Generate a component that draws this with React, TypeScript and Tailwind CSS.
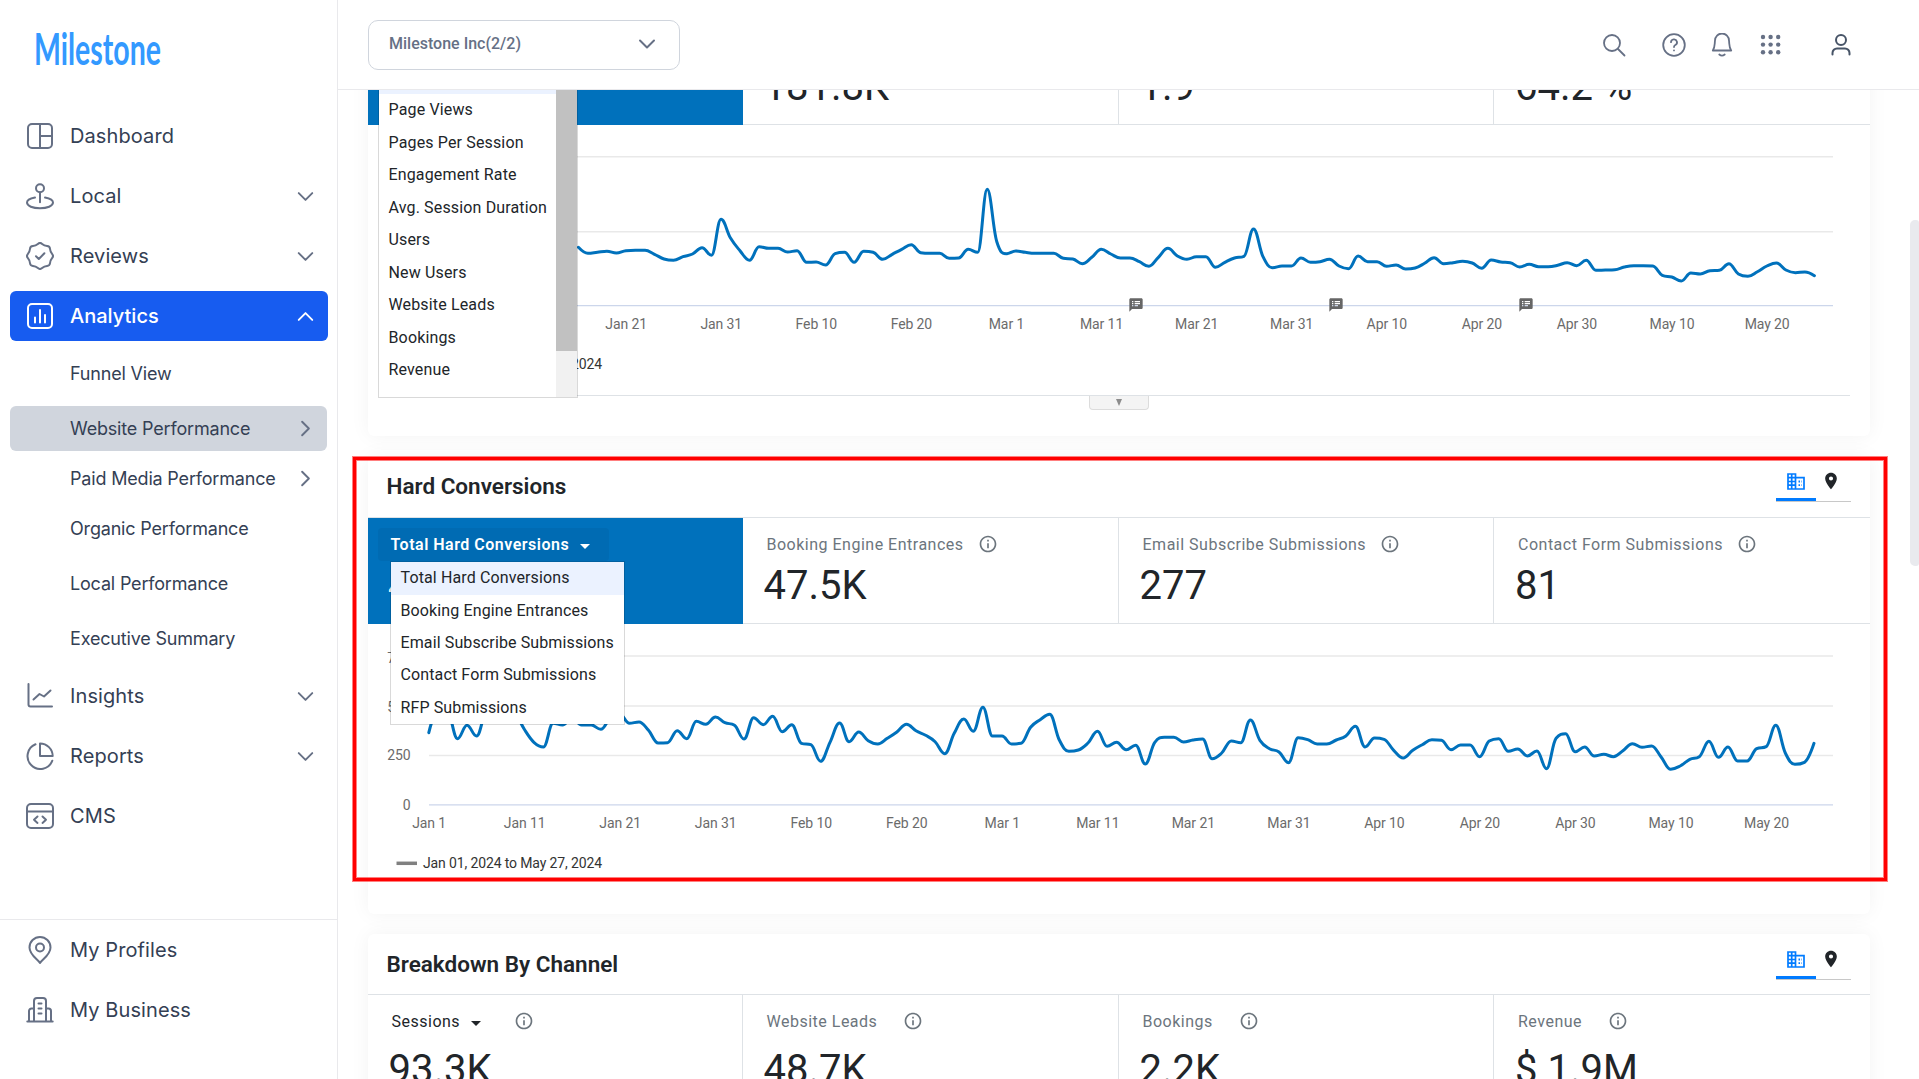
import React from "react";
import { ChevronDown, ChevronRight, ChevronUp } from "lucide-react";
import { MdLocationOn, MdOutlineInfo, MdSpeakerNotes } from "react-icons/md";

type IconProps = { className?: string };

const Stroke: React.FC<React.PropsWithChildren<{ size?: number; width?: number }>> = ({ size = 28, width = 2, children }) => (
  <svg
    width={size}
    height={size}
    viewBox={`0 0 ${size} ${size}`}
    fill="none"
    stroke="currentColor"
    strokeWidth={width}
    strokeLinecap="round"
    strokeLinejoin="round"
    className="shrink-0"
  >
    {children}
  </svg>
);

// Eight-lobed outline for the reviews badge
const badgePath = (() => {
  const pts = Array.from({ length: 16 }, (_, i) => {
    const r = i % 2 === 0 ? 13.9 : 11.1;
    const a = (i * Math.PI) / 8;
    return [14 + r * Math.sin(a), 14 - r * Math.cos(a)];
  });
  const mid = (i: number) => {
    const a = pts[i % 16];
    const b = pts[(i + 1) % 16];
    return `${((a[0] + b[0]) / 2).toFixed(2)} ${((a[1] + b[1]) / 2).toFixed(2)}`;
  };
  let d = `M${mid(15)}`;
  for (let i = 0; i < 16; i++) d += `Q${pts[i][0].toFixed(2)} ${pts[i][1].toFixed(2)} ${mid(i)}`;
  return d + "Z";
})();

const DashboardIcon = () => (
  <Stroke>
    <rect x="2" y="2" width="24" height="24" rx="4" />
    <path d="M14 2v24M14 14h12" />
  </Stroke>
);

const LocalIcon = () => (
  <Stroke>
    <circle cx="14" cy="6.3" r="4" />
    <path d="M14 10.3v10M9 15.6c-4.500.8-8 2.600-8 5 0 3.400 5.800 5.700 13 5.700s13-2.300 13-5.700c0-2.400-3.500-4.200-8-5" />
  </Stroke>
);

const ReviewsIcon = () => (
  <Stroke>
    <path d={badgePath} />
    <path d="M10 14.300l2.800 2.700 5.600-5.700" />
  </Stroke>
);

const AnalyticsIcon = () => (
  <Stroke>
    <rect x="2" y="2" width="24" height="24" rx="4" />
    <path d="M9 15.500v5M14 8v12.500M19 13v7.500" />
  </Stroke>
);

const InsightsIcon = () => (
  <Stroke>
    <path d="M2.500 2v20.500a2 2 0 0 0 2 2H26M7.500 17.500l6-5.500 4.500 2.500 6.500-6" />
  </Stroke>
);

const ReportsIcon = () => (
  <Stroke>
    <path d="M14 1.500V14h12.700A12.700 12.700 0 0 0 14 1.500Z" />
    <path d="M9.500 2.300a12.800 12.800 0 1 0 16.800 16.400" />
  </Stroke>
);

const CmsIcon = () => (
  <Stroke>
    <rect x="1" y="2" width="26" height="24" rx="4" />
    <path d="M1 9.500h26M11.500 14.500L8 17.700l3.500 3.200M16.500 14.500l3.500 3.200-3.500 3.200" />
  </Stroke>
);

const ProfilesIcon = () => (
  <Stroke>
    <path d="M14 27c-2-3.500-10.500-8-10.500-15.500a10.500 10.500 0 0 1 21 0C24.500 19 16 23.500 14 27Z" />
    <circle cx="14" cy="11.500" r="4" />
  </Stroke>
);

const BusinessIcon = () => (
  <Stroke>
    <path d="M1.300 25.500h25.400M8 25V5a3 3 0 0 1 3-3h6a3 3 0 0 1 3 3v20M3 25V15a2.500 2.500 0 0 1 2.500-2.500H8M20 12.500h2.500A2.500 2.500 0 0 1 25 15v10M12.500 7.500h3M12.500 12.500h3M12.500 17.500h3" />
  </Stroke>
);

const BuildingIcon = ({ className }: IconProps) => (
  <svg width="18" height="18" viewBox="0 0 18 18" className={className} fill="none" stroke="currentColor" strokeWidth="1.700">
    <path d="M1 1h7.500v15H1ZM4.700 1v15M1 4.700h7.500M1 8.500h7.500M1 12.200h7.500M8.500 4.700H17V16H8.500" />
    <path d="M11.500 8.500h3M11.500 12.200h3" strokeWidth="1.800" strokeDasharray="1.500 1" />
  </svg>
);

type NavItem = { label: string; icon: React.ReactNode; expandable?: boolean };

const topNav: NavItem[] = [
  { label: "Dashboard", icon: <DashboardIcon /> },
  { label: "Local", icon: <LocalIcon />, expandable: true },
  { label: "Reviews", icon: <ReviewsIcon />, expandable: true },
];

const lowerNav: NavItem[] = [
  { label: "Insights", icon: <InsightsIcon />, expandable: true },
  { label: "Reports", icon: <ReportsIcon />, expandable: true },
  { label: "CMS", icon: <CmsIcon /> },
];

const NavRow: React.FC<NavItem> = ({ label, icon, expandable }) => (
  <a className="flex h-[50px] items-center rounded-md pl-4 pr-2 text-[#667085]">
    {icon}
    <span className="ml-4 flex-1 text-[20px] tracking-[0.1px] text-[#344054]">{label}</span>
    {expandable && <ChevronDown size={27} strokeWidth={1.7} />}
  </a>
);

const Sidebar = () => (
  <aside className="flex h-full w-[338px] shrink-0 flex-col border-r border-[#e9e9ec] font-['Inter',sans-serif]">
    <div className="h-[111px] pl-[34px] pt-5">
      <svg width="134" height="64" className="text-[#3399ff]">
        <text
          x="0"
          y="44.5"
          fill="currentColor"
          fontSize="43"
          fontWeight="700"
          textLength="127"
          lengthAdjust="spacingAndGlyphs"
          className="font-['Lato',sans-serif]"
        >
          Milestone
        </text>
      </svg>
    </div>
    <nav className="flex flex-1 flex-col px-2.5 text-[#667085]">
      <div className="flex flex-col gap-2.5">
        {topNav.map((item) => (
          <NavRow key={item.label} {...item} />
        ))}
        <a className="flex h-[50px] w-[318px] items-center rounded-md bg-[#175cf0] pl-4 pr-[9px] text-white">
          <AnalyticsIcon />
          <span className="ml-4 flex-1 text-[20px] font-medium">Analytics</span>
          <ChevronUp size={27} strokeWidth={1.7} />
        </a>
      </div>
      <div className="flex flex-col text-[18px] tracking-[-0.18px] text-[#344054]">
        <a className="mt-2.5 flex h-[45px] items-center pl-[60px]">Funnel View</a>
        <a className="mt-2.5 flex h-[45px] items-center justify-between rounded-md bg-[#d0d5dd] pl-[60px] pr-2">
          Website Performance
          <ChevronRight size={27} strokeWidth={1.7} className="text-[#667085]" />
        </a>
        <a className="mt-[5px] flex h-[45px] items-center justify-between pl-[60px] pr-2">
          Paid Media Performance
          <ChevronRight size={27} strokeWidth={1.7} className="text-[#667085]" />
        </a>
        <a className="mt-[5px] flex h-[45px] items-center pl-[60px]">Organic Performance</a>
        <a className="mt-2.5 flex h-[45px] items-center pl-[60px]">Local Performance</a>
        <a className="mt-2.5 flex h-[45px] items-center pl-[60px]">Executive Summary</a>
      </div>
      <div className="mt-2.5 flex flex-col gap-2.5">
        {lowerNav.map((item) => (
          <NavRow key={item.label} {...item} />
        ))}
      </div>
    </nav>
    <div className="flex h-[160px] flex-col gap-2.5 border-t border-[#e9e9ec] px-2.5 pt-[5px]">
      <NavRow label="My Profiles" icon={<ProfilesIcon />} />
      <NavRow label="My Business" icon={<BusinessIcon />} />
    </div>
  </aside>
);

const Header = () => (
  <header className="flex h-[90px] shrink-0 items-center border-b border-[#e9e9ec] bg-white pl-[30px] pr-[66.5px] text-[#667085]">
    <button className="flex h-[50px] w-[312px] items-center justify-between rounded-[10px] border border-[#d0d5dd] pl-5 pr-[18px]">
      <span className="pb-0.5 text-[16px] font-medium">Milestone Inc(2/2)</span>
      <ChevronDown size={28} strokeWidth={1.7} className="-mt-0.5" />
    </button>
    <div className="ml-auto flex items-center">
      <Stroke size={24} width={1.8}>
        <circle cx="10" cy="10" r="8" />
        <path d="M16 16l6.500 6.500" />
      </Stroke>
      <div className="ml-9">
        <Stroke size={24} width={1.8}>
          <circle cx="12" cy="12" r="10.800" />
          <path d="M9 9.200a3 3 0 1 1 4.300 2.800c-.9.500-1.300 1-1.300 2M12 17.300v.1" />
        </Stroke>
      </div>
      <div className="ml-6">
        <Stroke size={24} width={1.8}>
          <path d="M2.800 17.500C5 14.500 4.500 12 5 7.500a7 7 0 0 1 14 0c.5 4.500 0 7 2.200 10ZM9.300 21.500c1.500 1.300 3.900 1.300 5.400 0" />
        </Stroke>
      </div>
      <svg width="24" height="24" viewBox="0 0 24 24" fill="currentColor" className="ml-[25px]">
        {[4, 11.6, 19.2].map((cy) => [4, 11.6, 19.2].map((cx) => <circle key={`${cx}-${cy}`} cx={cx} cy={cy} r="2.200" />))}
      </svg>
      <div className="ml-[46px] text-[#475467]">
        <Stroke size={24} width={2}>
          <circle cx="12" cy="7" r="5" />
          <path d="M3.500 21.500v-1.500a4.500 4.500 0 0 1 4.500-4.500h8a4.500 4.500 0 0 1 4.500 4.500v1.500" />
        </Stroke>
      </div>
    </div>
  </header>
);

/* ---------- charts ---------- */

const sessionLine = [
  247.3, 253.3, 252.3, 251.3, 253, 250.7, 250.3, 250.3, 254.3, 259, 260.3, 256.7, 254, 247.7, 255.3, 219.3, 238, 250.7, 260.3, 246.7,
  248.3, 248.3, 252, 250.7, 262.3, 262, 265, 253.7, 252.3, 262.3, 251.3, 252.3, 259.3, 254.3, 249.3, 244.7, 252.7, 253.3, 253.3, 258.3,
  258, 249.3, 252.3, 189.3, 241.7, 253.7, 251, 252.3, 253.3, 253.3, 253.3, 258.3, 259, 263.7, 257.3, 249.3, 254, 258, 258, 261.7,
  266.3, 257.3, 248.3, 256, 259.3, 256.7, 256.7, 267.3, 262.3, 258, 256.3, 229, 256.7, 267.7, 266, 266, 258, 262.3, 261.7, 259.3,
  266, 268.7, 256, 261.7, 261.7, 266.3, 265, 269, 268, 263.3, 257.7, 263.7, 262.7, 261.3, 263, 268.3, 260, 262, 262.7, 267,
  264.3, 266.7, 266.7, 265.3, 262.7, 265.7, 260.3, 270.3, 270, 269.7, 267, 265.7, 265.7, 266, 275.3, 277, 281, 273, 274, 270.7,
  270.3, 263.7, 274, 276.3, 271.7, 266, 263, 270, 272.7, 272, 275.7,
];

const conversionLine = [
  732.7, 709, 712, 738.7, 725.3, 736, 711, 706, 704, 712, 729.3, 742.3, 747, 723.3, 725, 718, 725, 725, 729.3, 718,
  714.5, 723.3, 722, 730.3, 743, 742.7, 730.7, 738.7, 721.3, 724.3, 717, 722.7, 725.3, 739, 717.7, 724.7, 716.3, 731.7, 724.7, 743.3,
  744.7, 761.3, 742.3, 723, 741.7, 732, 740.7, 744, 738.3, 732, 724.3, 730.7, 735.3, 741.7, 753.7, 733.3, 719, 731.3, 707.3, 736,
  736, 744, 743.3, 727.3, 719.7, 714.3, 740, 751.3, 750, 743, 731.3, 746.3, 742.3, 749.7, 745.3, 764, 742.3, 737.3, 737.3, 742,
  740, 739, 758.7, 753, 741, 742.7, 720, 740.3, 748.7, 752, 762.7, 737.7, 739.7, 744, 744, 740, 736, 726.3, 747, 738,
  739.3, 750.3, 758, 750.3, 744.7, 739.7, 740.3, 749.7, 745, 745, 756.7, 741, 738.7, 751.3, 749, 756, 751, 768.7, 738.3, 733.7,
  751.7, 747, 756, 754.3, 756.7, 750.7, 743.7, 747.3, 746, 757, 769.3, 766, 759.3, 756.7, 741.3, 757.3, 747, 761, 761, 748.7,
  746.7, 725.3, 753, 764.3, 762.3, 743.3,
];

const dates = ["Jan 1", "Jan 11", "Jan 21", "Jan 31", "Feb 10", "Feb 20", "Mar 1", "Mar 11", "Mar 21", "Mar 31", "Apr 10", "Apr 20", "Apr 30", "May 10", "May 20"];

// Spline that never overshoots a local peak or valley
function splinePath(ys: number[], x0: number, step: number) {
  const k = 1.5;
  let d = `M${x0} ${ys[0]}`;
  let right = [x0, ys[0]];
  for (let i = 1; i < ys.length; i++) {
    const x = x0 + i * step;
    const y = ys[i];
    let left = [x, y];
    let nextRight = [x, y];
    if (i < ys.length - 1) {
      const prevY = ys[i - 1];
      const nextY = ys[i + 1];
      const lx = (k * x + x - step) / (k + 1);
      const rx = (k * x + x + step) / (k + 1);
      let ly = (k * y + prevY) / (k + 1);
      let ry = (k * y + nextY) / (k + 1);
      const corr = ((ry - ly) * (rx - x)) / (rx - lx) + y - ry;
      ly += corr;
      ry += corr;
      if (ly > prevY && ly > y) {
        ly = Math.max(prevY, y);
        ry = 2 * y - ly;
      } else if (ly < prevY && ly < y) {
        ly = Math.min(prevY, y);
        ry = 2 * y - ly;
      }
      if (ry > nextY && ry > y) {
        ry = Math.max(nextY, y);
        ly = 2 * y - ry;
      } else if (ry < nextY && ry < y) {
        ry = Math.min(nextY, y);
        ly = 2 * y - ry;
      }
      left = [lx, ly];
      nextRight = [rx, ry];
    }
    d += `C${right[0].toFixed(1)} ${right[1].toFixed(1)} ${left[0].toFixed(1)} ${left[1].toFixed(1)} ${x.toFixed(1)} ${y}`;
    right = nextRight;
  }
  return d;
}

interface ChartProps {
  top: number;
  height: number;
  grid: number[];
  axis: number;
  path: string;
  labelStart: number;
  labelStep: number;
  yLabels?: { text: string; y: number }[];
}

const Chart: React.FC<ChartProps> = ({ top, height, grid, axis, path, labelStart, labelStep, yLabels = [] }) => (
  <svg width="1502" height={height} viewBox={`368 ${top} 1502 ${height}`} className="block" fontSize="14" fill="#6b6b6b">
    {grid.map((y) => (
      <path key={y} d={`M429 ${y}H1833`} stroke="#e9e9e9" strokeWidth="1.500" />
    ))}
    <path d={`M429 ${axis}H1833`} stroke="#ccd6eb" strokeWidth="1.300" />
    <path d={path} fill="none" stroke="#0071bc" strokeWidth="3" strokeLinecap="round" strokeLinejoin="round" />
    {dates.map((t, i) => (
      <text key={t} x={labelStart + i * labelStep} y={axis + 23.4} textAnchor="middle" letterSpacing="-0.1">
        {t}
      </text>
    ))}
    {yLabels.map((l) => (
      <text key={l.text} x="410.500" y={l.y} textAnchor="end" letterSpacing="-0.1">
        {l.text}
      </text>
    ))}
    <path d={`M396.500 ${axis + 58.500}h20.500`} stroke="#808080" strokeWidth="3.500" />
    <text x="423" y={axis + 63.4} fill="#333333" letterSpacing="-0.13">
      Jan 01, 2024 to May 27, 2024
    </text>
  </svg>
);

/* ---------- cards ---------- */

interface StatProps {
  label: string;
  value: string;
  wide?: boolean;
  caret?: boolean;
}

const Caret = () => <span className="mt-[3px] block h-0 w-0 border-x-[5px] border-t-[5px] border-x-transparent border-t-current" />;

const Stat: React.FC<StatProps> = ({ label, value, wide, caret }) => (
  <div className="h-full border-r border-[#dee2e6] pl-[23.500px] pt-[15px] text-[#6c757d] last:border-r-0 last:pl-6">
    <div className="flex h-6 items-center">
      <span className={caret ? "text-[16px] tracking-[0.5px] text-[#212529]" : "text-[16px] tracking-[0.5px]"}>{label}</span>
      {caret && (
        <span className="ml-[11px] text-[#212529]">
          <Caret />
        </span>
      )}
      <MdOutlineInfo size={20} className={caret ? "-mt-0.5 ml-[33px]" : wide ? "-mt-0.5 ml-[26px]" : "-mt-0.5 ml-[14px]"} />
    </div>
    <p className={wide ? "-ml-[3px] mt-3 text-[40px] leading-[48px] text-[#212529]" : "-ml-[3px] mt-[5px] text-[40px] leading-[48px] text-[#212529]"}>
      {value}
    </p>
  </div>
);

const ViewToggle = () => (
  <div className="mr-[19px] flex border-b border-[#c8c8c8]">
    <span className="flex h-[39px] w-10 items-start justify-center border-b-[3px] border-[#007bff] pt-[11px] text-[#007bff]">
      <BuildingIcon />
    </span>
    <span className="flex w-[35px] justify-center pr-[5px] pt-[9px] text-[#212529]">
      <MdLocationOn size={20} />
    </span>
  </div>
);

const CardTitle = ({ children }: React.PropsWithChildren) => (
  <div className="flex h-[60px] items-start justify-between pl-[18.500px] pt-[6px]">
    <h2 className="pt-[8px] text-[22.5px] font-semibold leading-8 text-[#212529]">{children}</h2>
    <ViewToggle />
  </div>
);

const card = "relative w-[1502px] shrink-0 rounded-md bg-white shadow-[0_0_20px_rgba(0,0,0,0.05)]";
const statGrid = "grid grid-cols-[375px_376px_375px_1fr] border-[#dee2e6]";
const menu = "absolute overflow-hidden border border-black/15 bg-white bg-clip-padding text-[16px] text-[#212529]";

const sessionMetrics = ["Page Views", "Pages Per Session", "Engagement Rate", "Avg. Session Duration", "Users", "New Users", "Website Leads", "Bookings", "Revenue"];
const conversionMetrics = ["Booking Engine Entrances", "Email Subscribe Submissions", "Contact Form Submissions", "RFP Submissions"];

const SessionsCard = () => (
  <section className={`${card} -mt-[72px] h-[418px]`}>
    <div className={`${statGrid} h-[107px] border-y`}>
      <div className="-my-px bg-[#0071bc]" />
      <Stat label="Page Views" value="181.8K" />
      <Stat label="Pages Per Session" value="1.9" />
      <Stat label="Engagement Rate" value="64.2 %" />
    </div>
    <Chart
      top={125}
      height={270}
      grid={[156.8, 231.8]}
      axis={305.6}
      path={splinePath(sessionLine, 578.4, 9.508)}
      labelStart={436}
      labelStep={95.08}
    />
    <div className="mx-5 border-t border-[#dee2e6]">
      <div className="mx-auto flex h-[14px] w-[60px] items-center justify-center rounded-b-[4px] border border-t-0 border-[#dcdcdc] bg-[#f4f4f4] text-[#8c8c8c]">
        <span className="border-x-[3.5px] border-t-[7px] border-x-transparent border-t-current" />
      </div>
    </div>
    {/* annotation flags on the time axis */}
    {["left-[760px]", "left-[960px]", "left-[1150px]"].map((pos) => (
      <MdSpeakerNotes key={pos} size={16} className={`absolute top-[279px] ${pos} text-[#666]`} />
    ))}
    <ul className={`${menu} left-[10px] top-[40px] h-[340px] w-[200px] pt-[2.500px] tracking-[0.15px]`}>
      <li className="h-[32.500px] bg-[#ebf2ff]" />
      {sessionMetrics.map((m) => (
        <li key={m} className="flex h-[32.500px] items-center pl-[9.500px]">{m}</li>
      ))}
      <li className="flex h-[32.500px] items-center pl-[9.500px] pt-0.5">Conv. Rate</li>
      <div className="absolute right-0 top-0 h-full w-[21px] bg-[#f1f1f1]">
        <div className="h-[292px] bg-[#c1c1c1]" />
      </div>
    </ul>
  </section>
);

const ConversionsCard = () => (
  <section className={`${card} h-[458px]`}>
    <CardTitle>Hard Conversions</CardTitle>
    <div className={`${statGrid} mt-px h-[107px] border-y`}>
      <div className="-mb-px bg-[#0071bc] pl-[10px] pt-[10px] text-white">
        <div className="flex h-[33px] w-[231px] items-center rounded-[4px] bg-[#006bb3] pl-[12.500px]">
          <span className="text-[16px] font-semibold tracking-[0.5px]">Total Hard Conversions</span>
          <span className="ml-[11px]">
            <Caret />
          </span>
        </div>
        <p className="ml-[10px] mt-[1px] text-[40px] leading-[48px]">48K</p>
      </div>
      <Stat label="Booking Engine Entrances" value="47.5K" />
      <Stat label="Email Subscribe Submissions" value="277" />
      <Stat label="Contact Form Submissions" value="81" />
    </div>
    <Chart
      top={624}
      height={289}
      grid={[656, 706, 755.6]}
      axis={804.8}
      path={splinePath(conversionLine, 428.8, 9.553)}
      labelStart={429.1}
      labelStep={95.53}
      yLabels={[
        { text: "750", y: 663 },
        { text: "500", y: 712 },
        { text: "250", y: 760.4 },
        { text: "0", y: 810.4 },
      ]}
    />
    <ul className={`${menu} left-[22px] top-[105px] h-[164px] w-[235px] tracking-[0.12px]`}>
      <li className="flex h-[32.500px] items-center bg-[#ebf2ff] pl-[9.500px]">Total Hard Conversions</li>
      {conversionMetrics.map((m) => (
        <li key={m} className="flex h-[32.300px] items-center pl-[9.500px]">{m}</li>
      ))}
    </ul>
    {/* highlight frame */}
    <div className="absolute -left-[15px] top-[1px] h-[424px] w-[1534px] border-[3px] border-[#ff0000] shadow-[0_0_0_1px_rgba(255,0,0,0.5),inset_0_0_0_1px_rgba(255,0,0,0.5)]" />
  </section>
);

const ChannelCard = () => (
  <section className={`${card} h-[400px]`}>
    <CardTitle>Breakdown By Channel</CardTitle>
    <div className={`${statGrid} h-[140px] border-t`}>
      <Stat label="Sessions" value="93.3K" wide caret />
      <Stat label="Website Leads" value="48.7K" wide />
      <Stat label="Bookings" value="2.2K" wide />
      <Stat label="Revenue" value="$ 1.9M" wide />
    </div>
  </section>
);

const App: React.FC = () => {
  return (
    <div className="relative flex h-[1079px] w-[1919px] overflow-hidden bg-white font-['Roboto',sans-serif]">
      <Sidebar />
      <div className="flex h-full flex-1 flex-col">
        <Header />
        <main className="flex flex-1 flex-col gap-5 overflow-hidden pl-[30px]">
          <SessionsCard />
          <ConversionsCard />
          <ChannelCard />
        </main>
      </div>
      {/* page scrollbar */}
      <div className="absolute right-0 top-[220px] h-[346px] w-[9px] rounded-l-[5px] rounded-r-[3px] bg-[#e9eaee]" />
    </div>
  );
};

export default App;
